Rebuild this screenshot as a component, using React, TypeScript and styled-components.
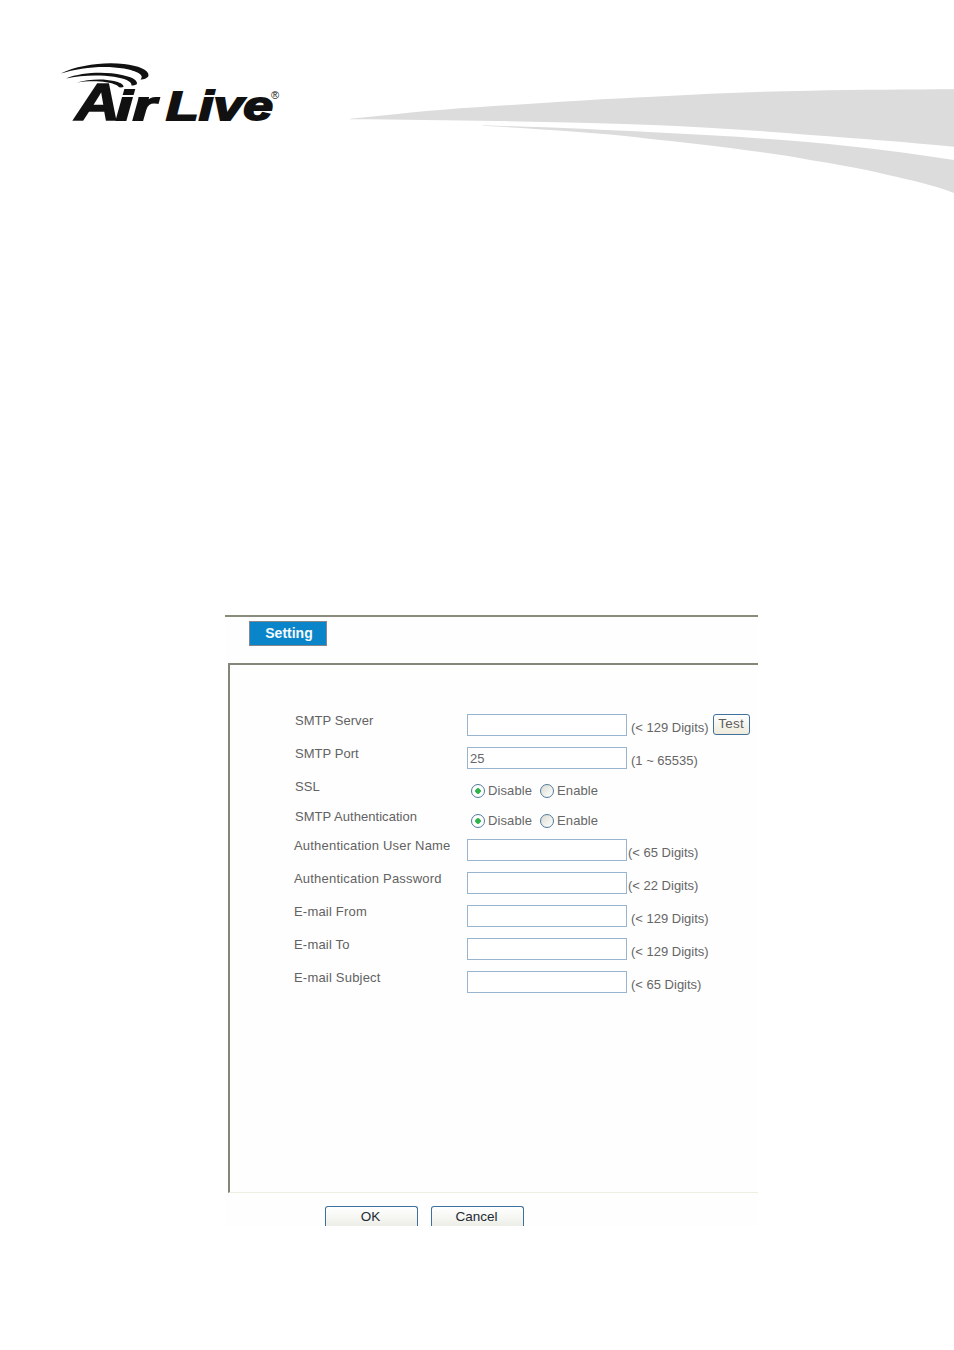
import styled, { createGlobalStyle } from "styled-components";

const GlobalStyle = createGlobalStyle`
    html, body {
        margin: 0;
        padding: 0;
        background: #ffffff;
    }
    body {
        font-family: "Liberation Sans", Arial, sans-serif;
    }
`;

const Page = styled.div`
    width: 954px;
    height: 1350px;
    overflow: hidden;
    background: #ffffff;
`;

const Header = styled.header`
    display: flex;
    align-items: flex-start;
    height: 615px;
    padding: 60px 0 0 60px;
    box-sizing: border-box;
`;

const Swoosh = styled.svg`
    flex: none;
    margin: 28px 0 0 65px;
`;

const Panel = styled.section`
    width: 533px;
    margin-left: 225px;
    background: #fefefe;
`;

const TabBar = styled.div`
    height: 48px;
    padding: 4px 0 0 24px;
    border-top: 2px solid #8b8b7c;
    box-sizing: border-box;
`;

const Tab = styled.div`
    display: flex;
    align-items: center;
    justify-content: center;
    width: 78px;
    height: 25px;
    padding: 0 0 2px 2px;
    box-sizing: border-box;
    border: 1px solid #85878a;
    background: #0a85c9;
    color: #f4fafd;
    font-size: 14px;
    font-weight: 700;
`;

const Box = styled.div`
    height: 530px;
    margin-left: 3px;
    padding: 49px 0 0 64px;
    box-sizing: border-box;
    border-top: 2px solid #85857a;
    border-left: 2px solid #85857a;
    border-bottom: 1px solid #eeeee2;
`;

const Row = styled.div<{ $height: number }>`
    display: flex;
    align-items: flex-start;
    height: ${(p) => p.$height}px;
`;

const Label = styled.label<{ $indent?: boolean }>`
    flex: none;
    width: 173px;
    box-sizing: border-box;
    padding-left: ${(p) => (p.$indent ? 1 : 0)}px;
    line-height: 14px;
    font-size: 13px;
    letter-spacing: ${(p) => (p.$indent ? 0.05 : 0.2)}px;
    color: #626262;
`;

const TextBox = styled.input`
    flex: none;
    width: 160px;
    height: 22px;
    margin: 0;
    padding: 1px 2px 0;
    box-sizing: border-box;
    border: 1px solid #98b4cf;
    outline: none;
    background: #ffffff;
    font-family: inherit;
    font-size: 13px;
    color: #666666;
`;

const Hint = styled.span<{ $tight?: boolean }>`
    margin: 6px 0 0 ${(p) => (p.$tight ? 1 : 4)}px;
    line-height: 15px;
    font-size: 13px;
    white-space: nowrap;
    color: #666666;
`;

const TestButton = styled.button`
    width: 37px;
    height: 21px;
    margin: 0 0 0 4px;
    padding: 0 0 3px;
    box-sizing: border-box;
    border: 1px solid #40709c;
    border-radius: 3px;
    background: linear-gradient(#ffffff, #eeebdc);
    font-family: inherit;
    font-size: 13.5px;
    letter-spacing: 0.3px;
    color: #606060;
`;

const RadioGroup = styled.div`
    display: flex;
    align-items: center;
    height: 21px;
    padding-left: 4px;
`;

const RadioLabel = styled.label`
    display: flex;
    align-items: center;
    margin-right: 8px;
    font-size: 13px;
    letter-spacing: 0.1px;
    color: #666666;
`;

const Radio = styled.input.attrs({ type: "radio" })`
    appearance: none;
    flex: none;
    width: 14px;
    height: 14px;
    margin: 0 3px 0 0;
    border: 1.5px solid #4f7a9e;
    border-radius: 50%;
    background: linear-gradient(135deg, #dcdcd4, #ffffff);

    &:checked {
        background: radial-gradient(circle, #2fb34a 0 2.5px, #ffffff 3px);
    }
`;

const Actions = styled.div`
    display: flex;
    gap: 13px;
    padding: 13px 0 0 100px;
`;

const ActionButton = styled.button`
    width: 93px;
    height: 20px;
    padding: 0 2px 1px 0;
    box-sizing: border-box;
    border: 1px solid #3f6f9d;
    border-bottom: none;
    border-radius: 3px 3px 0 0;
    background: linear-gradient(#ffffff, #eeeee8);
    font-family: inherit;
    font-size: 13.5px;
    color: #222b35;
`;

const logoFont = {
    fontFamily: "Liberation Sans",
    fontWeight: 700,
    fontStyle: "italic",
    stroke: "#111111",
    lengthAdjust: "spacingAndGlyphs",
} as const;

const Logo = () => (
    <svg width="225" height="80" viewBox="60 60 225 80" aria-label="Air Live">
        <g fill="#111111">
            <path d="M60.5 73.5 C78 65 104 61.5 124 64 C138 65.8 149 69.5 148.5 75.5 C148 78 144 79.5 140.5 79.5 C145 75 137 71 124 68.5 C104 65 80 67.5 60.5 73.5 Z" />
            <path d="M66 78.5 C82 72 106 71.5 122 75 C130 76.8 137.5 79 137 84 C135.5 85 133 85.5 131.5 85.5 C132 81 124 78.5 114 76.8 C98 74.5 80 75.5 66 78.5 Z" />
            <path d="M77 82.5 C88 79 104 78.5 114 81 C119 82.3 124 84 123.5 87 C122 87.5 120.5 87.5 119 87.3 C117 84 108 82 100 81.5 C92 81 84 81.3 77 82.5 Z" />
            <text {...logoFont} x="75" y="120" fontSize="52" strokeWidth="1.4" textLength="45">
                A
            </text>
            <text {...logoFont} x="116" y="120" fontSize="40" strokeWidth="1.8" textLength="40">
                ir
            </text>
            <text {...logoFont} x="166" y="120" fontSize="40" strokeWidth="1.8" textLength="107">
                Live
            </text>
            <text x="271" y="99" fontFamily="Liberation Sans" fontSize="11">
                ®
            </text>
        </g>
    </svg>
);

const HeaderSwoosh = () => (
    <Swoosh width="604" height="106" viewBox="350 88 604 106">
        <path
            fill="#dcdcdc"
            d="M350 118.7 C390 115 430 110 477 107.3 C540 103 600 99 653 96.7 C710 93.5 760 91.5 810 90.7 C860 89.8 910 89.4 954 89.3 L954 146.7 C905 142 860 138.5 810 135 C760 130.5 705 127.5 653 125 C600 122.8 550 121.8 497 121 C450 120.3 400 119.6 350 119.3 Z"
        />
        <path
            fill="#dcdcdc"
            d="M483 125.3 C540 127 600 129.5 653 132.3 C710 135 760 138 810 142.3 C860 147 910 153 954 160 L954 193 C930 184 910 180 888 175 C860 168 835 164 810 160 C785 155 760 152 732 148.3 C705 145 680 142 653 139.3 C625 135.5 600 133.5 575 131.7 C545 129.5 515 127.5 483 125.7 Z"
        />
    </Swoosh>
);

const Choice = ({ name }: { name: string }) => (
    <RadioGroup>
        <RadioLabel>
            <Radio name={name} defaultChecked />
            Disable
        </RadioLabel>
        <RadioLabel>
            <Radio name={name} />
            Enable
        </RadioLabel>
    </RadioGroup>
);

const App = () => {
    return (
        <Page>
            <GlobalStyle />
            <Header>
                <Logo />
                <HeaderSwoosh />
            </Header>
            <Panel>
                <TabBar>
                    <Tab>Setting</Tab>
                </TabBar>
                <Box>
                    <Row $height={33}>
                        <Label $indent>SMTP Server</Label>
                        <TextBox />
                        <Hint>(&lt; 129 Digits)</Hint>
                        <TestButton>Test</TestButton>
                    </Row>
                    <Row $height={33}>
                        <Label $indent>SMTP Port</Label>
                        <TextBox defaultValue="25" />
                        <Hint>(1 ~ 65535)</Hint>
                    </Row>
                    <Row $height={30}>
                        <Label $indent>SSL</Label>
                        <Choice name="ssl" />
                    </Row>
                    <Row $height={29}>
                        <Label $indent>SMTP Authentication</Label>
                        <Choice name="auth" />
                    </Row>
                    <Row $height={33}>
                        <Label>Authentication User Name</Label>
                        <TextBox />
                        <Hint $tight>(&lt; 65 Digits)</Hint>
                    </Row>
                    <Row $height={33}>
                        <Label>Authentication Password</Label>
                        <TextBox />
                        <Hint $tight>(&lt; 22 Digits)</Hint>
                    </Row>
                    <Row $height={33}>
                        <Label>E-mail From</Label>
                        <TextBox />
                        <Hint>(&lt; 129 Digits)</Hint>
                    </Row>
                    <Row $height={33}>
                        <Label>E-mail To</Label>
                        <TextBox />
                        <Hint>(&lt; 129 Digits)</Hint>
                    </Row>
                    <Row $height={33}>
                        <Label>E-mail Subject</Label>
                        <TextBox />
                        <Hint>(&lt; 65 Digits)</Hint>
                    </Row>
                </Box>
                <Actions>
                    <ActionButton>OK</ActionButton>
                    <ActionButton>Cancel</ActionButton>
                </Actions>
            </Panel>
        </Page>
    );
};

export default App;
